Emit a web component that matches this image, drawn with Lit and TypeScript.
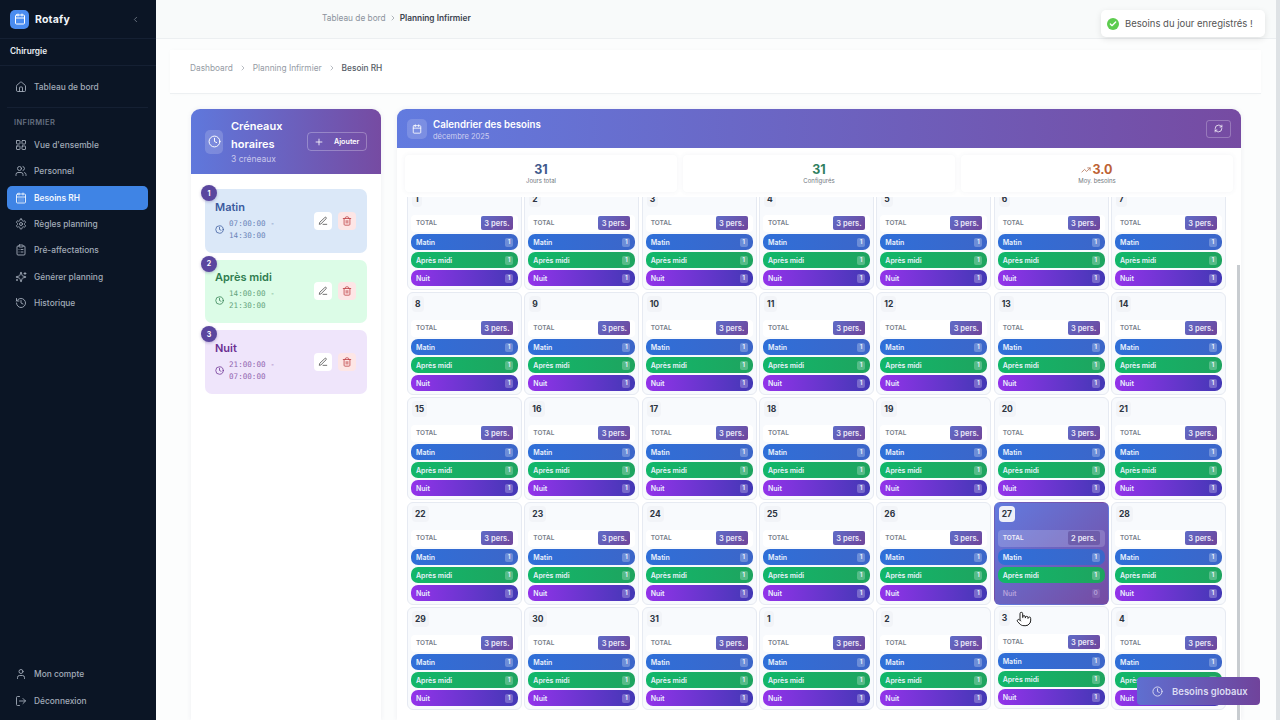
import { LitElement, html, css, svg } from "lit";
import { customElement } from "lit/decorators.js";

const ICONS: Record<string, unknown> = {
  home: svg`<path d="M15 21v-8a1 1 0 0 0-1-1h-4a1 1 0 0 0-1 1v8"/><path d="M3 10a2 2 0 0 1 .709-1.528l7-5.999a2 2 0 0 1 2.582 0l7 5.999A2 2 0 0 1 21 10v9a2 2 0 0 1-2 2H5a2 2 0 0 1-2-2z"/>`,
  grid: svg`<rect x="3" y="3" width="7" height="7" rx="1"/><rect x="14" y="3" width="7" height="7" rx="1"/><rect x="14" y="14" width="7" height="7" rx="1"/><rect x="3" y="14" width="7" height="7" rx="1"/>`,
  users: svg`<path d="M16 21v-2a4 4 0 0 0-4-4H6a4 4 0 0 0-4 4v2"/><circle cx="9" cy="7" r="4"/><path d="M22 21v-2a4 4 0 0 0-3-3.87"/><path d="M16 3.13a4 4 0 0 1 0 7.75"/>`,
  calendarDays: svg`<path d="M8 2v4"/><path d="M16 2v4"/><rect x="3" y="4" width="18" height="18" rx="2"/><path d="M3 10h18"/><path d="M8 14h.01M12 14h.01M16 14h.01M8 18h.01M12 18h.01M16 18h.01"/>`,
  calendar: svg`<path d="M8 2v4"/><path d="M16 2v4"/><rect x="3" y="4" width="18" height="18" rx="2"/><path d="M3 10h18"/>`,
  settings: svg`<path d="M12.22 2h-.44a2 2 0 0 0-2 2v.18a2 2 0 0 1-1 1.73l-.43.25a2 2 0 0 1-2 0l-.15-.08a2 2 0 0 0-2.73.73l-.22.38a2 2 0 0 0 .73 2.73l.15.1a2 2 0 0 1 1 1.72v.51a2 2 0 0 1-1 1.74l-.15.09a2 2 0 0 0-.73 2.73l.22.38a2 2 0 0 0 2.73.73l.15-.08a2 2 0 0 1 2 0l.43.25a2 2 0 0 1 1 1.73V20a2 2 0 0 0 2 2h.44a2 2 0 0 0 2-2v-.18a2 2 0 0 1 1-1.73l.43-.25a2 2 0 0 1 2 0l.15.08a2 2 0 0 0 2.73-.73l.22-.39a2 2 0 0 0-.73-2.73l-.15-.08a2 2 0 0 1-1-1.74v-.5a2 2 0 0 1 1-1.74l.15-.09a2 2 0 0 0 .73-2.73l-.22-.38a2 2 0 0 0-2.73-.73l-.15.08a2 2 0 0 1-2 0l-.43-.25a2 2 0 0 1-1-1.73V4a2 2 0 0 0-2-2z"/><circle cx="12" cy="12" r="3"/>`,
  clipboard: svg`<rect x="8" y="2" width="8" height="4" rx="1"/><path d="M16 4h2a2 2 0 0 1 2 2v14a2 2 0 0 1-2 2H6a2 2 0 0 1-2-2V6a2 2 0 0 1 2-2h2"/><path d="M12 11h4M12 16h4M8 11h.01M8 16h.01"/>`,
  sparkles: svg`<path d="M9.937 15.5A2 2 0 0 0 8.5 14.063l-6.135-1.582a.5.5 0 0 1 0-.962L8.5 9.936A2 2 0 0 0 9.937 8.5l1.582-6.135a.5.5 0 0 1 .963 0L14.063 8.5A2 2 0 0 0 15.5 9.937l6.135 1.581a.5.5 0 0 1 0 .964L15.5 14.063a2 2 0 0 0-1.437 1.437l-1.582 6.135a.5.5 0 0 1-.963 0z"/><path d="M20 3v4M22 5h-4M4 17v2M5 18H3"/>`,
  history: svg`<path d="M3 12a9 9 0 1 0 9-9 9.75 9.75 0 0 0-6.74 2.74L3 8"/><path d="M3 3v5h5"/><path d="M12 7v5l4 2"/>`,
  user: svg`<path d="M19 21v-2a4 4 0 0 0-4-4H9a4 4 0 0 0-4 4v2"/><circle cx="12" cy="7" r="4"/>`,
  logout: svg`<path d="M9 21H5a2 2 0 0 1-2-2V5a2 2 0 0 1 2-2h4"/><path d="m16 17 5-5-5-5"/><path d="M21 12H9"/>`,
  clock: svg`<circle cx="12" cy="12" r="10"/><path d="M12 6v6l4 2"/>`,
  plus: svg`<path d="M5 12h14M12 5v14"/>`,
  pen: svg`<path d="M12 20h9"/><path d="M16.5 3.5a2.12 2.12 0 0 1 3 3L7 19l-4 1 1-4Z"/>`,
  trash: svg`<path d="M3 6h18"/><path d="M19 6v14c0 1-1 2-2 2H7c-1 0-2-1-2-2V6"/><path d="M8 6V4c0-1 1-2 2-2h4c1 0 2 1 2 2v2"/><path d="M10 11v6M14 11v6"/>`,
  refresh: svg`<path d="M3 12a9 9 0 0 1 9-9 9.75 9.75 0 0 1 6.74 2.74L21 8"/><path d="M21 3v5h-5"/><path d="M21 12a9 9 0 0 1-9 9 9.75 9.75 0 0 1-6.74-2.74L3 16"/><path d="M8 16H3v5"/>`,
  trend: svg`<path d="M16 7h6v6"/><path d="m22 7-8.5 8.5-5-5L2 17"/>`,
  chevronLeft: svg`<path d="m15 18-6-6 6-6"/>`,
  chevronRight: svg`<path d="m9 18 6-6-6-6"/>`,
  pointer: svg`<path d="M22 14a8 8 0 0 1-8 8"/><path d="M18 11v-1a2 2 0 0 0-2-2a2 2 0 0 0-2 2"/><path d="M14 10V9a2 2 0 0 0-2-2a2 2 0 0 0-2 2v1"/><path d="M10 9.5V4a2 2 0 0 0-2-2a2 2 0 0 0-2 2v10"/><path d="M18 11a2 2 0 1 1 4 0v3a8 8 0 0 1-8 8h-2c-2.8 0-4.5-.86-5.99-2.34l-3.6-3.6a2 2 0 0 1 2.83-2.82L7 15"/>`,
};

const icon = (name: string, size = 12, width = 2) => html`<svg
  class="icon"
  width=${size}
  height=${size}
  viewBox="0 0 24 24"
  fill="none"
  stroke="currentColor"
  stroke-width=${width}
  stroke-linecap="round"
  stroke-linejoin="round"
>${ICONS[name]}</svg>`;

const NAV = [
  { label: "Vue d'ensemble", icon: "grid" },
  { label: "Personnel", icon: "users" },
  { label: "Besoins RH", icon: "calendarDays", active: true },
  { label: "Règles planning", icon: "settings" },
  { label: "Pré-affectations", icon: "clipboard" },
  { label: "Générer planning", icon: "sparkles" },
  { label: "Historique", icon: "history" },
];

const SLOTS = [
  { n: 1, name: "Matin", start: "07:00:00 -", end: "14:30:00", cls: "blue" },
  { n: 2, name: "Après midi", start: "14:00:00 -", end: "21:30:00", cls: "green" },
  { n: 3, name: "Nuit", start: "21:00:00 -", end: "07:00:00", cls: "purple" },
];

const STATS = [
  { value: "31", label: "Jours total", cls: "navy" },
  { value: "31", label: "Configurés", cls: "teal" },
  { value: "3.0", label: "Moy. besoins", cls: "orange", trend: true },
];

const DAYS = [...Array(31).keys()].map((d) => d + 1).concat([1, 2, 3, 4]);
const HOVERED = 26;
const LIFTED = 33;

@customElement("app-root")
export class AppRoot extends LitElement {
  static styles = css`
    :host {
      display: block;
      position: relative;
      height: 720px;
      overflow: hidden;
      font-family: Inter, "Liberation Sans", sans-serif;
      color: #374151;
      background: #fcfdfd;
    }
    .icon {
      display: block;
      flex: none;
    }
    .shell {
      display: flex;
      height: 720px;
    }

    /* sidebar */
    .side {
      width: 156px;
      flex: none;
      display: flex;
      flex-direction: column;
      background: #0b1525;
      color: #a3acb9;
    }
    .brand {
      height: 38px;
      flex: none;
      display: flex;
      align-items: center;
      gap: 6px;
      padding: 0 16px 0 10px;
      border-bottom: 1px solid #152033;
    }
    .logo {
      width: 19px;
      height: 19px;
      border-radius: 5px;
      background: #4a8cf0;
      color: #fff;
      display: flex;
      align-items: center;
      justify-content: center;
    }
    .brand b {
      flex: 1;
      font-size: 10.5px;
      font-weight: 700;
      color: #f2f5f9;
      letter-spacing: 0.2px;
    }
    .brand .icon {
      color: #7d8794;
    }
    .logo .icon {
      color: #fff;
    }
    .unit {
      height: 24px;
      padding-bottom: 2px;
      flex: none;
      display: flex;
      align-items: center;
      padding-left: 10px;
      font-size: 8.3px;
      font-weight: 600;
      color: #e8ecf1;
      border-bottom: 1px solid #152033;
    }
    .nav-item {
      height: 24px;
      margin: 0 8px 2.33px 7px;
      flex: none;
      display: flex;
      align-items: center;
      gap: 7px;
      padding-left: 8px;
      border-radius: 5px;
      font-size: 8.4px;
      font-weight: 500;
    }
    .nav-item.active {
      background: #3f84e5;
      color: #f3f7fd;
      font-weight: 600;
    }
    .top-nav {
      padding-top: 9px;
      padding-bottom: 8px;
      border-bottom: 1px solid #152033;
      margin: 0 8px 0 7px;
    }
    .top-nav .nav-item {
      margin: 0;
    }
    .section {
      font-size: 7.5px;
      font-weight: 600;
      letter-spacing: 0.4px;
      color: #667080;
      padding: 10px 0 6px 14px;
    }
    .side-foot {
      margin-top: auto;
      padding: 10px 0 5px;
    }

    /* main column */
    .main {
      flex: 1;
      min-width: 0;
      display: flex;
      flex-direction: column;
    }
    .topbar {
      height: 39px;
      box-sizing: border-box;
      flex: none;
      display: flex;
      align-items: center;
      gap: 3px;
      padding: 0 0 2px 166px;
      font-size: 8.3px;
      color: #8b929c;
      background: #f8fafa;
      border-bottom: 1px solid #eceff1;
    }
    .topbar b {
      font-weight: 600;
      color: #3c4450;
    }
    .content {
      flex: 1;
      min-height: 0;
      display: flex;
      flex-direction: column;
      padding: 11px 15px 0 14px;
    }
    .crumbs {
      height: 44px;
      box-sizing: border-box;
      flex: none;
      display: flex;
      align-items: center;
      gap: 6px;
      padding: 0 0 7px 20px;
      font-size: 8.3px;
      color: #959ba4;
      background: #fff;
      border-bottom: 1px solid #edf0f2;
      box-shadow: 0 0 4px rgba(0, 0, 0, 0.02);
    }
    .crumbs b {
      font-weight: 500;
      color: #555c66;
    }
    .columns {
      flex: 1;
      min-height: 0;
      display: flex;
      gap: 16px;
      padding: 15px 20px 0 21px;
    }

    /* time slots */
    .slots {
      width: 190px;
      flex: none;
      border-radius: 9px 9px 0 0;
      background: #fff;
      box-shadow: 0 0 5px rgba(60, 70, 110, 0.08);
    }
    .slots-head {
      height: 65px;
      display: flex;
      align-items: center;
      padding: 0 14px;
      color: #fff;
      border-radius: 9px 9px 0 0;
      background: linear-gradient(90deg, #5f78dc, #764ba2);
    }
    .head-icon {
      width: 18px;
      height: 24px;
      flex: none;
      display: flex;
      align-items: center;
      justify-content: center;
      border-radius: 5px;
      background: rgba(255, 255, 255, 0.17);
      margin-right: 8px;
    }
    .slots-title {
      width: 76px;
      flex: none;
      font-size: 11px;
      font-weight: 600;
      line-height: 17.5px;
    }
    .slots-title small {
      display: block;
      font-size: 8.5px;
      font-weight: 400;
      line-height: 12px;
      color: #c9c8ec;
    }
    .add {
      width: 60px;
      height: 19px;
      flex: none;
      display: flex;
      align-items: center;
      gap: 10px;
      padding-left: 6px;
      box-sizing: border-box;
      font-size: 7.2px;
      font-weight: 600;
      border: 1px solid rgba(255, 255, 255, 0.28);
      border-radius: 4px;
    }
    .slot-list {
      display: flex;
      flex-direction: column;
      gap: 7px;
      padding: 15px 14px 0;
    }
    .slot {
      position: relative;
      height: 63.5px;
      display: flex;
      align-items: center;
      justify-content: space-between;
      padding: 0 11px 0 10px;
      border-radius: 7px;
    }
    .slot.blue {
      background: #dbe8f8;
      color: #3a5a9e;
    }
    .slot.green {
      background: #dcfce7;
      color: #2f7d4f;
    }
    .slot.purple {
      background: #efe5fb;
      color: #6b2f91;
    }
    .slot-num {
      position: absolute;
      top: -4px;
      left: -4px;
      width: 16px;
      height: 16px;
      display: flex;
      align-items: center;
      justify-content: center;
      font-size: 7px;
      font-weight: 700;
      color: #fff;
      border-radius: 50%;
      background: #5a469e;
      box-shadow: 0 1px 3px rgba(60, 40, 120, 0.3);
    }
    .slot-name {
      font-size: 11px;
      font-weight: 600;
      line-height: 14px;
      margin-bottom: 4px;
    }
    .slot-time {
      display: flex;
      align-items: center;
      gap: 5px;
    }
    .slot-time span {
      font-family: "DejaVu Sans Mono", "Liberation Mono", monospace;
      font-size: 7.6px;
      line-height: 12px;
      opacity: 0.7;
    }
    .slot-actions {
      display: flex;
      gap: 6px;
    }
    .slot-btn {
      width: 18px;
      height: 18px;
      display: flex;
      align-items: center;
      justify-content: center;
      border-radius: 4px;
      background: #fff;
      color: #555;
    }
    .slot-btn.danger {
      background: #fde6e6;
      color: #c0474a;
    }

    /* calendar */
    .calendar {
      flex: 1;
      min-width: 0;
      display: flex;
      flex-direction: column;
      border-radius: 9px 9px 0 0;
      background: #fff;
      box-shadow: 0 0 5px rgba(60, 70, 110, 0.08);
    }
    .cal-head {
      height: 39px;
      flex: none;
      display: flex;
      align-items: center;
      padding: 0 10px;
      color: #fff;
      border-radius: 9px 9px 0 0;
      background: linear-gradient(90deg, #627bdf, #764ba2);
    }
    .cal-icon {
      width: 20px;
      height: 20px;
      display: flex;
      align-items: center;
      justify-content: center;
      border-radius: 5px;
      background: rgba(255, 255, 255, 0.16);
      margin-right: 6px;
    }
    .cal-title {
      flex: 1;
      padding-top: 3px;
      font-size: 9.7px;
      font-weight: 600;
      line-height: 12px;
    }
    .cal-title small {
      display: block;
      margin-top: 1px;
      font-size: 7.5px;
      font-weight: 400;
      line-height: 10px;
      color: #cfd0f0;
    }
    .refresh {
      width: 25px;
      height: 18px;
      display: flex;
      align-items: center;
      justify-content: center;
      border: 1px solid rgba(255, 255, 255, 0.25);
      border-radius: 3px;
      box-sizing: border-box;
    }
    .stats {
      flex: none;
      display: grid;
      grid-template-columns: repeat(3, 1fr);
      gap: 6px;
      padding: 7px 8px 5px;
    }
    .stat {
      height: 37px;
      display: flex;
      flex-direction: column;
      align-items: center;
      justify-content: center;
      border-radius: 4px;
      background: #fff;
      box-shadow: 0 0 5px rgba(70, 80, 110, 0.07);
    }
    .stat-value {
      display: flex;
      align-items: center;
      gap: 1px;
      font-size: 12.5px;
      font-weight: 700;
      line-height: 15px;
    }
    .stat-value.navy {
      color: #40598c;
    }
    .stat-value.teal {
      color: #2f7f5f;
    }
    .stat-value.orange {
      color: #bd6233;
    }
    .stat-value .icon {
      color: #b5765a;
    }
    .stat-label {
      font-size: 6px;
      line-height: 8px;
      color: #717780;
    }
    .cal-scroll {
      position: relative;
      flex: 1;
      min-height: 0;
      overflow: hidden;
      padding: 0 15px 0 10px;
    }
    .days {
      display: grid;
      grid-template-columns: repeat(7, 1fr);
      gap: 2px 2.33px;
      margin-top: -10px;
    }
    .day {
      height: 103px;
      box-sizing: border-box;
      display: flex;
      flex-direction: column;
      padding: 3px;
      border: 1px solid #e6eaf2;
      border-radius: 6px;
      background: #f8fafd;
    }
    .day.lifted {
      transform: translateY(-1px);
    }
    .day.hover {
      border-color: transparent;
      background: linear-gradient(135deg, #627bdf, #764ba2);
    }
    .num {
      align-self: flex-start;
      height: 16px;
      padding: 0 3px;
      display: flex;
      align-items: center;
      justify-content: center;
      font-size: 8.5px;
      font-weight: 700;
      color: #2d3442;
      border-radius: 4px;
      background: #f2f4f8;
      margin-left: 1px;
    }
    .day.hover .num {
      background: #eef0f8;
    }
    .total {
      height: 18px;
      margin: 8px 0 2px;
      display: flex;
      align-items: center;
      justify-content: space-between;
      padding: 0 5px;
      font-size: 6.5px;
      font-weight: 600;
      color: #777e8a;
      background: #fff;
      border-radius: 4px;
    }
    .total span {
      width: 32px;
      height: 14px;
      display: flex;
      align-items: center;
      justify-content: center;
      font-size: 7.5px;
      font-weight: 600;
      color: #eceaf8;
      border-radius: 2px;
      background: linear-gradient(135deg, #5f6cc8, #70449a);
    }
    .day.hover .total {
      color: #f0eef8;
      background: rgba(255, 255, 255, 0.18);
    }
    .day.hover .total span {
      background: rgba(90, 70, 150, 0.55);
    }
    .bars {
      display: flex;
      flex-direction: column;
      gap: 2px;
    }
    .bar {
      height: 16px;
      display: flex;
      align-items: center;
      justify-content: space-between;
      padding: 0 5px;
      font-size: 7px;
      font-weight: 600;
      color: #eaf1fc;
      border-radius: 7px;
    }
    .bar i {
      width: 8px;
      height: 9px;
      display: flex;
      align-items: center;
      justify-content: center;
      font-size: 6.5px;
      font-style: normal;
      border-radius: 2px;
      background: rgba(255, 255, 255, 0.25);
    }
    .bar.b0 {
      background: linear-gradient(90deg, #2f6fd8, #3c66c9);
    }
    .bar.b1 {
      background: linear-gradient(90deg, #12b76a, #1ea45f);
    }
    .bar.b2 {
      background: linear-gradient(90deg, #9333ea, #4338b5);
    }
    .bar.off {
      background: transparent;
      color: #b5a1dc;
    }
    .bar.off i {
      background: rgba(255, 255, 255, 0.1);
    }
    .thumb {
      position: absolute;
      top: 68px;
      right: 1px;
      bottom: 0;
      width: 3px;
      background: #c8ccd0;
    }
    .page-bar {
      width: 4px;
      flex: none;
      background: #dee2e5;
    }

    /* overlays */
    .toast {
      position: absolute;
      top: 10px;
      left: 1101px;
      width: 164px;
      height: 27px;
      box-sizing: border-box;
      display: flex;
      align-items: center;
      gap: 6px;
      padding-left: 6px;
      font-size: 9.5px;
      color: #555;
      background: #fff;
      border-radius: 5px;
      box-shadow: 0 2px 6px rgba(0, 0, 0, 0.1);
    }
    .check {
      width: 12px;
      height: 12px;
      flex: none;
      display: flex;
      align-items: center;
      justify-content: center;
      color: #fff;
      border-radius: 50%;
      background: #5dcc4f;
    }
    .global {
      position: absolute;
      top: 677px;
      left: 1137px;
      width: 123px;
      height: 28px;
      box-sizing: border-box;
      display: flex;
      align-items: center;
      gap: 9px;
      padding-left: 15px;
      font-size: 9.5px;
      font-weight: 600;
      color: #dcdcf3;
      border-radius: 4px;
      background: linear-gradient(90deg, #5f6fd0, #70439b);
    }
    .cursor {
      position: absolute;
      top: 611px;
      left: 1016px;
      color: #222;
    }
    .cursor .icon {
      fill: #fff;
    }
  `;

  private navItem(label: string, name: string, active = false) {
    return html`<div class="nav-item ${active ? "active" : ""}">
      ${icon(name, 12, 1.8)}<span>${label}</span>
    </div>`;
  }

  private renderDay(day: number, index: number) {
    const hover = index === HOVERED;
    const lifted = index === LIFTED;
    return html`<div class="day ${hover ? "hover" : ""} ${lifted ? "lifted" : ""}">
      <div class="num">${day}</div>
      <div class="total">TOTAL<span>${hover ? "2 pers." : "3 pers."}</span></div>
      <div class="bars">
        <div class="bar b0">Matin<i>1</i></div>
        <div class="bar b1">Après midi<i>1</i></div>
        <div class="bar ${hover ? "off" : "b2"}">Nuit<i>${hover ? 0 : 1}</i></div>
      </div>
    </div>`;
  }

  render() {
    return html`
      <div class="shell">
        <aside class="side">
          <div class="brand">
            <div class="logo">${icon("calendar", 12)}</div>
            <b>Rotafy</b>
            ${icon("chevronLeft", 9)}
          </div>
          <div class="unit">Chirurgie</div>
          <div class="top-nav">${this.navItem("Tableau de bord", "home")}</div>
          <div class="section">INFIRMIER</div>
          ${NAV.map((n) => this.navItem(n.label, n.icon, n.active))}
          <div class="side-foot">
            ${this.navItem("Mon compte", "user")}
            ${this.navItem("Déconnexion", "logout")}
          </div>
        </aside>

        <div class="main">
          <header class="topbar">
            <span>Tableau de bord</span>
            ${icon("chevronRight", 8)}
            <b>Planning Infirmier</b>
          </header>
          <div class="content">
            <nav class="crumbs">
              <span>Dashboard</span>
              ${icon("chevronRight", 8)}
              <span>Planning Infirmier</span>
              ${icon("chevronRight", 8)}
              <b>Besoin RH</b>
            </nav>
            <div class="columns">
              <section class="slots">
                <div class="slots-head">
                  <div class="head-icon">${icon("clock", 13, 1.8)}</div>
                  <div class="slots-title">
                    Créneaux horaires
                    <small>3 créneaux</small>
                  </div>
                  <div class="add">${icon("plus", 10)}<span>Ajouter</span></div>
                </div>
                <div class="slot-list">
                  ${SLOTS.map(
                    (s) => html`<div class="slot ${s.cls}">
                      <div class="slot-num">${s.n}</div>
                      <div>
                        <div class="slot-name">${s.name}</div>
                        <div class="slot-time">
                          ${icon("clock", 9)}
                          <span>${s.start}<br />${s.end}</span>
                        </div>
                      </div>
                      <div class="slot-actions">
                        <div class="slot-btn">${icon("pen", 10)}</div>
                        <div class="slot-btn danger">${icon("trash", 10)}</div>
                      </div>
                    </div>`
                  )}
                </div>
              </section>

              <section class="calendar">
                <div class="cal-head">
                  <div class="cal-icon">${icon("calendar", 10)}</div>
                  <div class="cal-title">
                    Calendrier des besoins
                    <small>décembre 2025</small>
                  </div>
                  <div class="refresh">${icon("refresh", 9)}</div>
                </div>
                <div class="stats">
                  ${STATS.map(
                    (s) => html`<div class="stat">
                      <div class="stat-value ${s.cls}">
                        ${s.trend ? icon("trend", 10) : ""}${s.value}
                      </div>
                      <div class="stat-label">${s.label}</div>
                    </div>`
                  )}
                </div>
                <div class="cal-scroll">
                  <div class="days">${DAYS.map((d, i) => this.renderDay(d, i))}</div>
                  <div class="thumb"></div>
                </div>
              </section>
            </div>
          </div>
        </div>
        <div class="page-bar"></div>
      </div>

      <div class="toast">
        <div class="check">
          <svg class="icon" width="8" height="8" viewBox="0 0 24 24" fill="none" stroke="currentColor" stroke-width="4" stroke-linecap="round" stroke-linejoin="round"><path d="M20 6 9 17l-5-5"/></svg>
        </div>
        Besoins du jour enregistrés !
      </div>
      <div class="global">${icon("clock", 11)}<span>Besoins globaux</span></div>
      <div class="cursor">${icon("pointer", 16, 1.5)}</div>
    `;
  }
}
